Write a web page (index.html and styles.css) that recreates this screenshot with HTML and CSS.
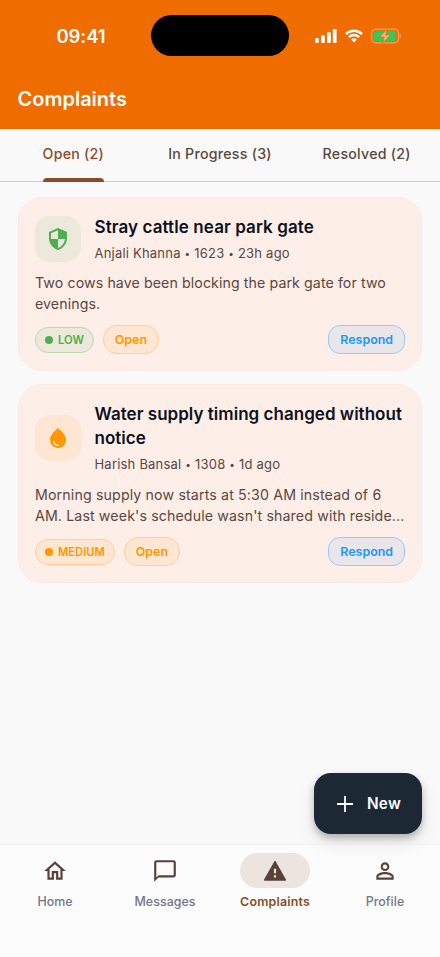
FILE: index.html
```html
<!DOCTYPE html>
<html lang="en">
<head>
<meta charset="utf-8">
<meta name="viewport" content="width=device-width, initial-scale=1">
<title>Complaints</title>
<link rel="stylesheet" href="styles.css">
</head>
<body>
<div class="app">
  <header class="header">
    <div class="status">
      <span class="clock">09:41</span>
      <span class="island"></span>
      <span class="indicators">
        <svg class="signal" viewBox="0 0 22 14"><rect x="0" y="9" width="3.8" height="5" rx="1"/><rect x="6" y="6.3" width="3.8" height="7.7" rx="1"/><rect x="12" y="3.3" width="3.8" height="10.7" rx="1"/><rect x="17.8" y="0" width="3.8" height="14" rx="1"/></svg>
        <svg class="wifi" viewBox="0 0 18 14"><g fill="none" stroke="#fff" stroke-width="2.5"><path d="M.9 5.1a11.6 11.6 0 0 1 16.2 0"/><path d="M3.9 8.2a7.3 7.3 0 0 1 10.2 0"/></g><path fill="#fff" d="M9 13.5l-2.9-2.9a4.2 4.2 0 0 1 5.8 0z"/></svg>
        <svg class="battery" viewBox="0 0 30 16"><rect x=".6" y="1.1" width="27" height="13.8" rx="4.2" fill="none" stroke="#f6a05e" stroke-width="1.2"/><rect x="2.3" y="2.8" width="22.5" height="10.4" rx="2.8" fill="#34c759"/><path fill="#f6a05e" d="M28.8 5.8q1.3.7 1.3 2.2t-1.3 2.2z"/><path d="M16.2.9L8.5 9h4.7l-1.5 6.2L19.4 7h-4.7z" fill="#ffb27a" stroke="#ee6c00" stroke-width=".8"/></svg>
      </span>
    </div>
    <h1 class="title">Complaints</h1>
  </header>
  <nav class="tabs">
    <div class="tab active"><span>Open (2)</span></div>
    <div class="tab"><span>In Progress (3)</span></div>
    <div class="tab"><span>Resolved (2)</span></div>
  </nav>
  <main class="list">
    <article class="card">
      <div class="card-head">
        <div class="tile low"><svg viewBox="0 0 24 24"><path d="M12 1L3 5v6c0 5.55 3.84 10.74 9 12 5.16-1.26 9-6.45 9-12V5l-9-4zm0 10.99h7c-.53 4.12-3.28 7.79-7 8.94V12H5V6.3l7-3.11v8.8z"/></svg></div>
        <div class="heading"><h2>Stray cattle near park gate</h2><p>Anjali Khanna <b>•</b> 1623 <b>•</b> 23h ago</p></div>
      </div>
      <p class="body wide">Two cows have been blocking the park gate for two evenings.</p>
      <div class="actions"><span class="priority low"><i></i>LOW</span><span class="chip">Open</span><button class="chip respond">Respond</button></div>
    </article>
    <article class="card">
      <div class="card-head">
        <div class="tile medium"><svg viewBox="0 0 24 24"><path d="M12 2c-5.33 4.55-8 8.48-8 11.8 0 4.98 3.8 8.2 8 8.2s8-3.22 8-8.2c0-3.32-2.67-7.25-8-11.8zm.3 17.9c-2.6.3-4.9-1.5-5.3-4.2-.1-.9 1.3-1.1 1.5-.2.3 2 1.8 3.1 3.7 2.9.9-.1 1.1 1.4.1 1.5z"/></svg></div>
        <div class="heading"><h2 class="long">Water supply timing changed without notice</h2><p>Harish Bansal <b>•</b> 1308 <b>•</b> 1d ago</p></div>
      </div>
      <p class="body">Morning supply now starts at 5:30 AM instead of 6 <br><span class="line">AM. Last week's schedule wasn't shared with reside...</span></p>
      <div class="actions"><span class="priority medium"><i></i>MEDIUM</span><span class="chip">Open</span><button class="chip respond">Respond</button></div>
    </article>
  </main>
  <button class="fab"><svg viewBox="0 0 16 16"><path d="M8 0v16M0 8h16"/></svg>New</button>
  <nav class="bottom">
    <div class="item"><span class="pill"><svg viewBox="0 0 24 24"><path d="M12 5.69l5 4.5V18h-2v-6H9v6H7v-7.81l5-4.5M12 3L2 12h3v8h6v-6h2v6h6v-8h3L12 3z"/></svg></span>Home</div>
    <div class="item"><span class="pill"><svg viewBox="0 0 24 24"><path d="M20 2H4c-1.1 0-2 .9-2 2v18l4-4h14c1.1 0 2-.9 2-2V4c0-1.1-.9-2-2-2zm0 14H6l-2 2V4h16v12z"/></svg></span>Messages</div>
    <div class="item active"><span class="pill"><svg viewBox="0 0 24 24"><path d="M2.6 21h18.8c.7 0 1-.7.7-1.2L12.7 3.3c-.3-.6-1.1-.6-1.4 0L1.9 19.8c-.3.5 0 1.2.7 1.2zM13 18h-2v-2h2v2zm0-4h-2v-4h2v4z"/></svg></span>Complaints</div>
    <div class="item"><span class="pill"><svg viewBox="0 0 24 24"><path d="M12 5.9c1.16 0 2.1.94 2.1 2.1s-.94 2.1-2.1 2.1S9.9 9.16 9.9 8s.94-2.1 2.1-2.1m0 9c2.97 0 6.1 1.46 6.1 2.1v1.1H5.9V17c0-.64 3.13-2.1 6.1-2.1M12 4C9.79 4 8 5.79 8 8s1.79 4 4 4 4-1.79 4-4-1.79-4-4-4zm0 9c-2.67 0-8 1.34-8 4v3h16v-3c0-2.66-5.33-4-8-4z"/></svg></span>Profile</div>
  </nav>
</div>
</body>
</html>
```

FILE: styles.css
```css
* { box-sizing: border-box; }
body { margin: 0; font-family: Inter, "Liberation Sans", sans-serif; background: #f9f9f9; color: #5a4740; }
h1, h2, p { margin: 0; }
button { font: inherit; margin: 0; border: 0; }
.app { position: relative; width: 440px; height: 957px; display: flex; flex-direction: column; overflow: hidden; }
.header { height: 129px; flex: none; background: #ee6c00; color: #fff; padding-top: 15px; }
.status { display: grid; grid-template-columns: 151px 138px 151px; align-items: center; height: 41px; }
.clock { padding-left: 56.5px; font-size: 18.5px; font-weight: 600; letter-spacing: -.1px; }
.island { height: 41px; border-radius: 21px; background: #000; }
.indicators { display: flex; align-items: center; padding-left: 26px; }
.signal { width: 22px; height: 14px; fill: #fff; }
.wifi { width: 18px; height: 14px; margin-left: 8px; }
.battery { width: 30px; height: 16px; margin-left: 8px; }
.title { padding: 30px 0 0 17.5px; font-size: 20px; line-height: 26px; font-weight: 600; letter-spacing: 0; }
.tabs { flex: none; height: 53px; display: grid; grid-template-columns: repeat(3, 1fr); border-bottom: 1px solid #d5cfcc; }
.tab { display: flex; justify-content: center; font-size: 14.2px; line-height: 50px; font-weight: 500; letter-spacing: .25px; white-space: nowrap; }
.tab span { height: 52px; }
.tab.active { color: #8a4b28; }
.tab.active span { position: relative; }
.tab.active span::after { content: ""; position: absolute; left: 0; right: 0; bottom: -1px; height: 4px; border-radius: 4px 4px 0 0; background: #8a4b28; }
.list { flex: 1; padding: 15px 18px 15px 17.5px; display: flex; flex-direction: column; gap: 13px; }
.card { border: 1px solid #faeae4; border-radius: 24px; background: #feeee8; padding: 16.5px 16px 16px 16.5px; }
.card-head { display: flex; align-items: center; gap: 13.5px; }
.tile { width: 46px; height: 46px; flex: none; border-radius: 15px; display: grid; place-items: center; }
.tile svg { width: 24px; height: 24px; fill: currentColor; }
.tile.low { background: #ece8da; color: #4caf50; }
.tile.medium { background: #fee6d2; color: #ff9800; }
.heading { min-width: 0; }
.heading h2 { font-size: 17px; line-height: 24.3px; font-weight: 600; letter-spacing: .1px; color: #0b1120; }
.heading h2.long { letter-spacing: .03px; }
.heading p { margin-top: 5px; font-size: 13px; line-height: 19px; letter-spacing: .21px; }
.heading b { font-size: 10px; font-weight: 400; vertical-align: 1.5px; line-height: 1; }
.body { margin-top: 9.6px; font-size: 14.2px; line-height: 21px; letter-spacing: .14px; }
.body.wide { letter-spacing: .09px; }
.line { white-space: nowrap; letter-spacing: .12px; }
.actions { margin-top: 11px; display: flex; align-items: center; gap: 9px; }
.priority, .chip { display: flex; align-items: center; justify-content: center; border: 1px solid; font-weight: 600; }
.priority { height: 26px; padding: 0 9px; border-radius: 13px; font-size: 11.2px; letter-spacing: 0; }
.priority i { width: 8px; height: 8px; border-radius: 50%; background: currentColor; margin-right: 5px; }
.priority.low { color: #4caf50; background: #ece8da; border-color: #b8dab2; }
.priority.medium, .chip { color: #ff9800; background: #fee6d2; border-color: #fed097; }
.chip { height: 29px; padding: 0 11px; border-radius: 14px; font-size: 12.4px; letter-spacing: 0; }
.chip.respond { margin-left: auto; color: #2196f3; background: #e8e6eb; border: 1px solid #98ccf3; border-radius: 12px; }
.fab { position: absolute; z-index: 2; left: 314px; top: 773px; width: 108px; height: 61px; border-radius: 17px; background: #1c2833; color: #fff; display: flex; align-items: center; padding: 0 0 0 23px; font-size: 15.3px; font-weight: 600; letter-spacing: .25px; box-shadow: 0 4px 7px rgba(0,0,0,.24), 0 9px 20px rgba(0,0,0,.09); }
.fab svg { width: 16px; height: 16px; margin-right: 14px; fill: none; stroke: #fff; stroke-width: 1.8; }
.bottom { flex: none; height: 112px; padding-top: 8px; display: grid; grid-template-columns: repeat(4, 1fr); background: #fcfcfc; box-shadow: 0 -1px 2px rgba(0,0,0,.025); }
.item { display: flex; flex-direction: column; align-items: center; font-size: 12.4px; line-height: 18px; font-weight: 500; letter-spacing: .05px; color: #717784; }
.pill { width: 70px; height: 35px; border-radius: 18px; display: grid; place-items: center; margin-bottom: 5px; color: #5a4138; }
.pill svg { width: 26px; height: 26px; fill: currentColor; }
.item.active { color: #8a4b28; font-weight: 600; letter-spacing: .2px; }
.item.active .pill { background: #ebe4df; }
```
